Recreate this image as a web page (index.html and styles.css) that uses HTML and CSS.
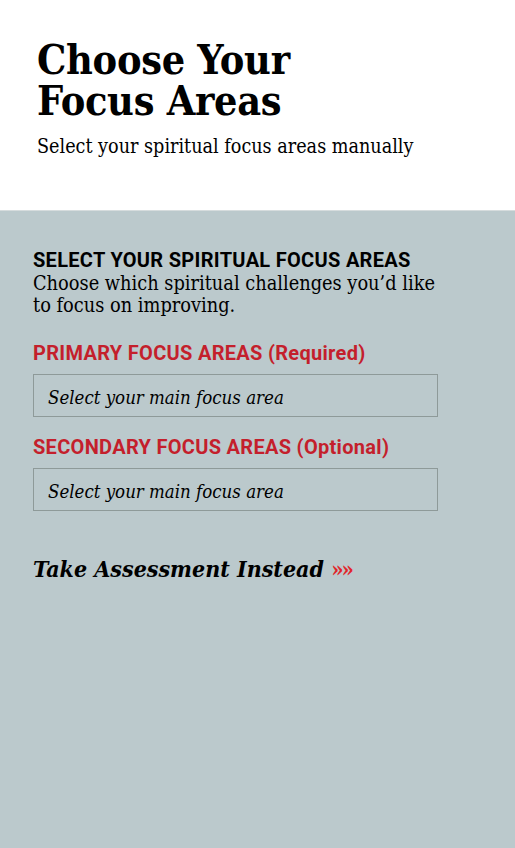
FILE: index.html
```html
<!DOCTYPE html>
<html lang="en">
<head>
<meta charset="utf-8">
<title>Choose Your Focus Areas</title>
<link rel="stylesheet" href="styles.css">
</head>
<body>
<header class="hero">
  <h1 class="hero-title">Choose Your<br>Focus Areas</h1>
  <p class="hero-sub">Select your spiritual focus areas manually</p>
</header>
<main class="panel">
  <h2 class="panel-title">SELECT YOUR SPIRITUAL FOCUS AREAS</h2>
  <p class="panel-desc">Choose which spiritual challenges you’d like<br>to focus on improving.</p>
  <div class="field">
    <label class="field-label">PRIMARY FOCUS AREAS (Required)</label>
    <div class="select">Select your main focus area</div>
  </div>
  <div class="field">
    <label class="field-label">SECONDARY FOCUS AREAS (Optional)</label>
    <div class="select">Select your main focus area</div>
  </div>
  <a class="assess" href="#">Take Assessment Instead <span class="arrows">»»</span></a>
</main>
</body>
</html>
```
FILE: styles.css
```css
html, body {
  margin: 0;
  padding: 0;
}
body {
  width: 515px;
  min-height: 848px;
  background: #bbc9cc;
  font-family: "DejaVu Serif", serif;
  font-stretch: condensed;
  color: #000;
}
.hero {
  background: #fff;
  height: 211px;
  box-sizing: border-box;
  padding: 40px 37px 0;
  border-bottom: 1px solid #d6dcdd;
}
.hero-title {
  margin: 0;
  font-weight: bold;
  font-size: 41px;
  line-height: 41px;
  letter-spacing: -0.3px;
}
.hero-sub {
  margin: 13px 0 0;
  font-size: 19.6px;
  line-height: 24px;
}
.panel {
  padding: 38px 33px 0;
}
.panel-title {
  margin: 0;
  font-family: Roboto, sans-serif;
  font-stretch: normal;
  font-weight: bold;
  font-size: 20px;
  letter-spacing: 0.3px;
  line-height: 22px;
}
.panel-desc {
  margin: 2px 0 0;
  font-size: 19.8px;
  line-height: 22px;
}
.field {
  margin-top: 25px;
}
.field + .field {
  margin-top: 19px;
}
.field-label {
  display: block;
  font-family: Roboto, sans-serif;
  font-stretch: normal;
  font-weight: bold;
  font-size: 20px;
  letter-spacing: 0.3px;
  line-height: 22px;
  color: #c41f2c;
}
.select {
  margin-top: 10px;
  width: 405px;
  height: 43px;
  box-sizing: border-box;
  border: 1px solid #8e9a99;
  padding: 3px 14px 0;
  display: flex;
  align-items: center;
  font-style: italic;
  font-size: 18.5px;
}
.assess {
  display: block;
  margin-top: 43px;
  font-style: italic;
  font-weight: bold;
  font-size: 23px;
  line-height: 30px;
  color: #000;
  text-decoration: none;
}
.arrows {
  color: #e0262b;
  font-style: normal;
  font-size: 22px;
  letter-spacing: -2px;
}
```
